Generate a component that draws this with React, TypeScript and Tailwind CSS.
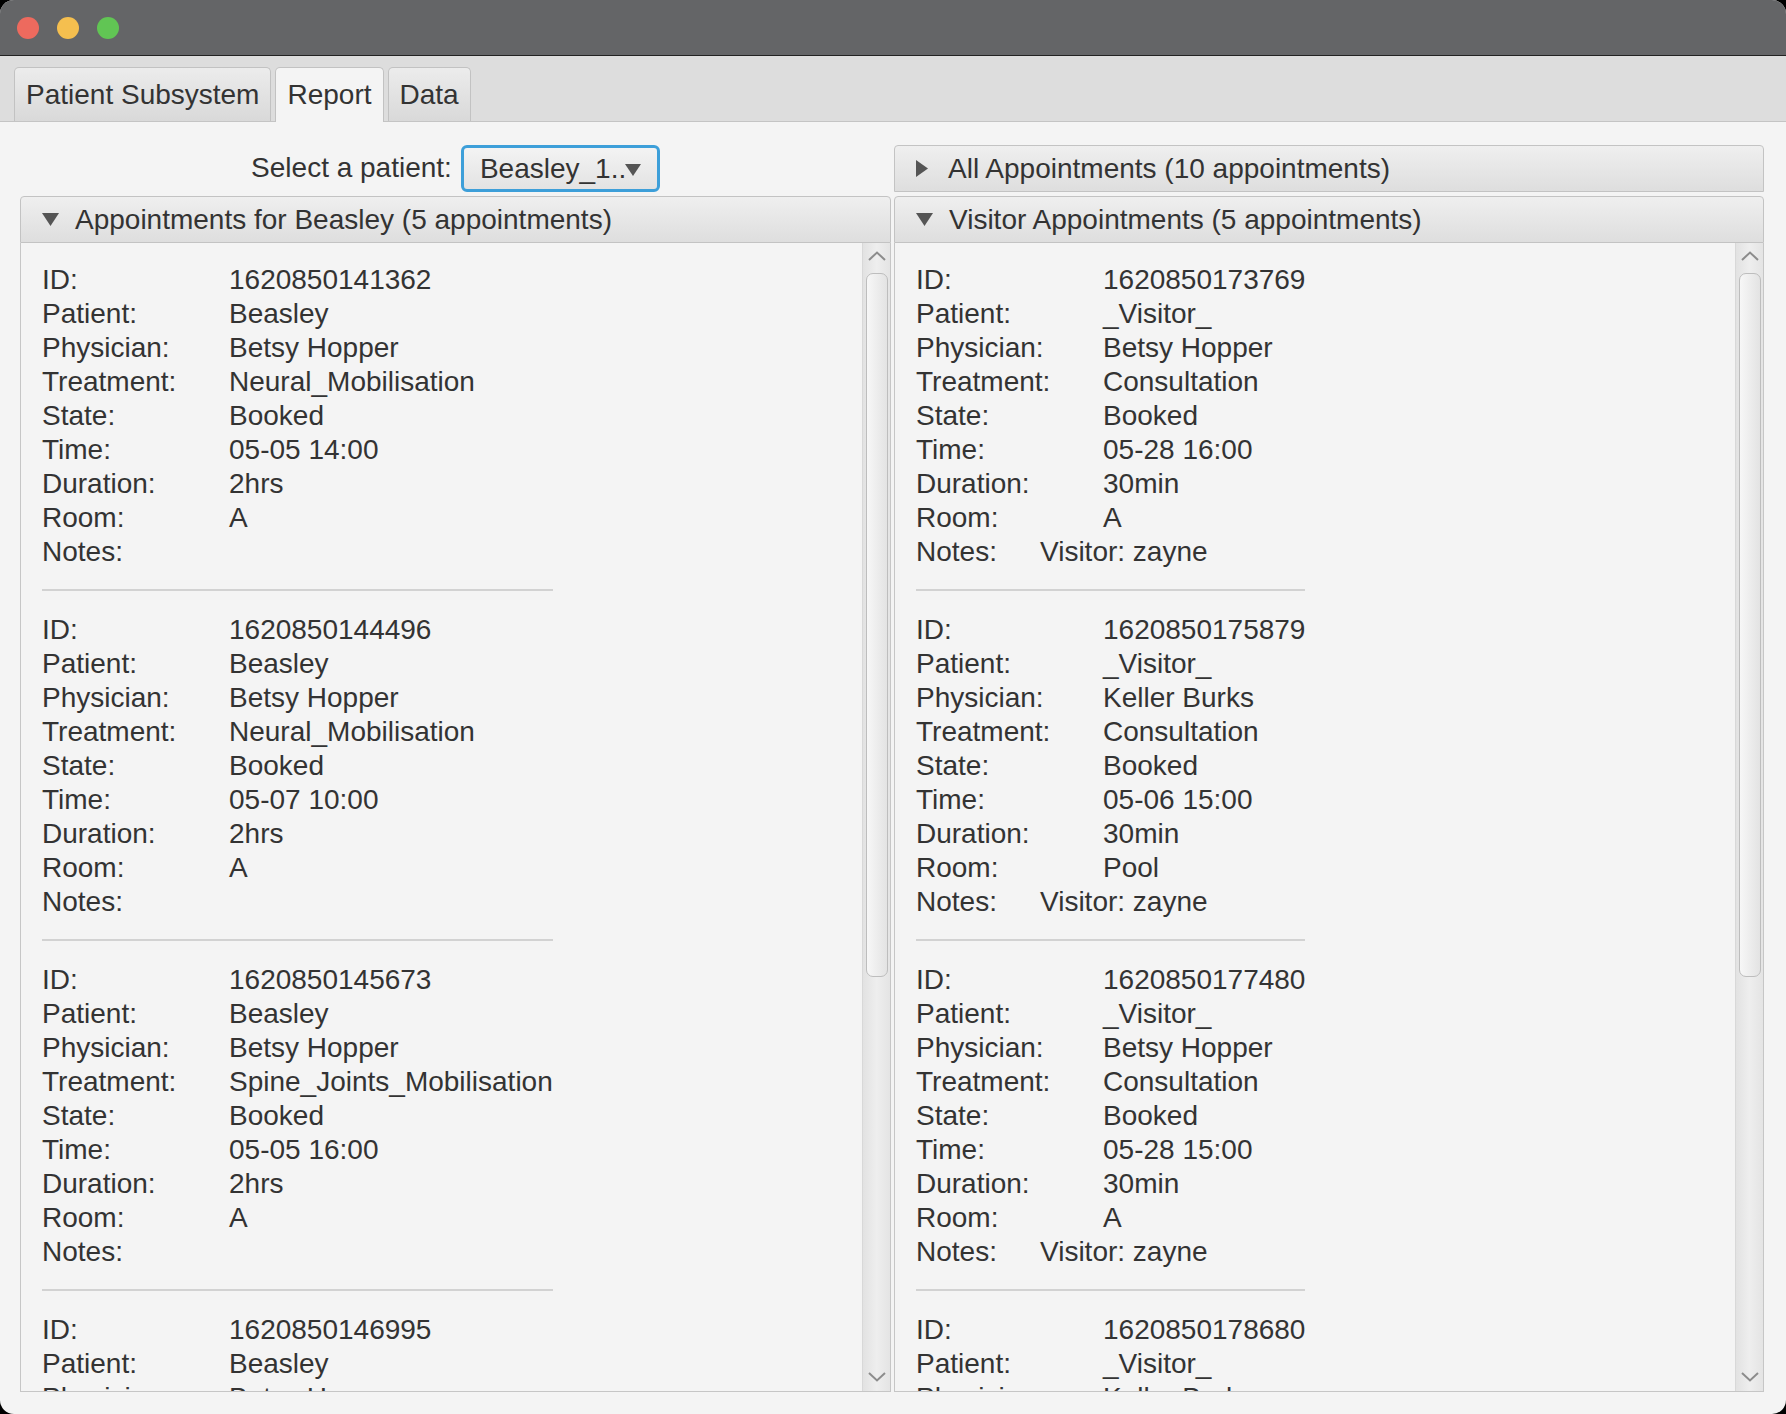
import React from "react";

type Appointment = {
  id: string;
  patient: string;
  physician: string;
  treatment: string;
  state: string;
  time: string;
  duration: string;
  room: string;
  notes: string;
};

const patientAppointments: Appointment[] = [
  { id: "1620850141362", patient: "Beasley", physician: "Betsy Hopper", treatment: "Neural_Mobilisation", state: "Booked", time: "05-05 14:00", duration: "2hrs", room: "A", notes: "" },
  { id: "1620850144496", patient: "Beasley", physician: "Betsy Hopper", treatment: "Neural_Mobilisation", state: "Booked", time: "05-07 10:00", duration: "2hrs", room: "A", notes: "" },
  { id: "1620850145673", patient: "Beasley", physician: "Betsy Hopper", treatment: "Spine_Joints_Mobilisation", state: "Booked", time: "05-05 16:00", duration: "2hrs", room: "A", notes: "" },
  { id: "1620850146995", patient: "Beasley", physician: "Betsy Hopper", treatment: "Neural_Mobilisation", state: "Booked", time: "05-08 11:00", duration: "2hrs", room: "A", notes: "" },
  { id: "1620850148210", patient: "Beasley", physician: "Betsy Hopper", treatment: "Neural_Mobilisation", state: "Booked", time: "05-10 09:00", duration: "2hrs", room: "A", notes: "" },
];

const visitorAppointments: Appointment[] = [
  { id: "1620850173769", patient: "_Visitor_", physician: "Betsy Hopper", treatment: "Consultation", state: "Booked", time: "05-28 16:00", duration: "30min", room: "A", notes: "Visitor: zayne" },
  { id: "1620850175879", patient: "_Visitor_", physician: "Keller Burks", treatment: "Consultation", state: "Booked", time: "05-06 15:00", duration: "30min", room: "Pool", notes: "Visitor: zayne" },
  { id: "1620850177480", patient: "_Visitor_", physician: "Betsy Hopper", treatment: "Consultation", state: "Booked", time: "05-28 15:00", duration: "30min", room: "A", notes: "Visitor: zayne" },
  { id: "1620850178680", patient: "_Visitor_", physician: "Keller Burks", treatment: "Consultation", state: "Booked", time: "05-30 10:00", duration: "30min", room: "A", notes: "Visitor: zayne" },
  { id: "1620850179901", patient: "_Visitor_", physician: "Betsy Hopper", treatment: "Consultation", state: "Booked", time: "06-01 14:00", duration: "30min", room: "A", notes: "Visitor: zayne" },
];

function TitleBar() {
  return (
    <div className="flex h-[56px] shrink-0 items-center gap-[18px] border-b border-[#222222] bg-[#646567] pl-[17px]">
      <span className="h-[22px] w-[22px] rounded-full bg-[#ed6a5e]" />
      <span className="h-[22px] w-[22px] rounded-full bg-[#f5bf4f]" />
      <span className="h-[22px] w-[22px] rounded-full bg-[#61c554]" />
    </div>
  );
}

const tabs = ["Patient Subsystem", "Report", "Data"];

function TabBar() {
  return (
    <div className="flex h-[66px] shrink-0 items-end gap-[4px] border-b border-[#c4c4c4] bg-[#dddddd] pl-[14px]">
      {tabs.map((tab) =>
        tab === "Report" ? (
          <div
            key={tab}
            className="relative -mb-px flex h-[55px] items-center rounded-t-[5px] border border-b-0 border-[#c2c2c2] bg-[#f4f4f4] px-[11px]"
          >
            {tab}
          </div>
        ) : (
          <div
            key={tab}
            className="flex h-[54px] items-center rounded-t-[5px] border border-b-0 border-[#c2c2c2] bg-gradient-to-b from-[#ececec] to-[#d9d9d9] px-[11px]"
          >
            {tab}
          </div>
        )
      )}
    </div>
  );
}

function Triangle({ open }: { open: boolean }) {
  return open ? (
    <svg width="17" height="13" viewBox="0 0 17 13" className="shrink-0">
      <path d="M0 0 H17 L8.5 13 Z" fill="#555555" />
    </svg>
  ) : (
    <svg width="12" height="17" viewBox="0 0 12 17" className="shrink-0">
      <path d="M0 0 L12 8.5 L0 17 Z" fill="#555555" />
    </svg>
  );
}

function PaneHeader({ title, open }: { title: string; open: boolean }) {
  return (
    <div
      className={
        "flex h-[47px] shrink-0 items-center rounded-t-[4px] border border-[#c3c3c3] bg-gradient-to-b from-[#efefef] to-[#dedede] pl-[21px] " +
        (open ? "gap-[16px]" : "gap-[20px]")
      }
    >
      <Triangle open={open} />
      <span>{title}</span>
    </div>
  );
}

function Chevron({ up }: { up: boolean }) {
  return (
    <svg width="18" height="10" viewBox="0 0 18 10" className="shrink-0">
      <path
        d={up ? "M1 9 L9 1.5 L17 9" : "M1 1 L9 8.5 L17 1"}
        fill="none"
        stroke="#8c8c8c"
        strokeWidth="2"
      />
    </svg>
  );
}

function ScrollBar() {
  return (
    <div className="flex w-[28px] shrink-0 flex-col items-center border-l border-[#d8d8d8] bg-gradient-to-r from-[#e2e2e2] via-[#eeeeee] to-[#e4e4e4]">
      <div className="mt-[8px]">
        <Chevron up />
      </div>
      <div className="mt-[12px] h-[704px] w-[22px] rounded-[7px] border border-[#bdbdbd] bg-gradient-to-r from-[#f7f7f7] to-[#e3e3e3]" />
      <div className="flex-1" />
      <div className="mb-[9px]">
        <Chevron up={false} />
      </div>
    </div>
  );
}

function Row({ label, value, wide = true }: { label: string; value: string; wide?: boolean }) {
  return (
    <div className="flex h-[34px] items-center whitespace-pre">
      <span className={wide ? "w-[187px] shrink-0" : "w-[124px] shrink-0"}>{label}</span>
      <span>{value}</span>
    </div>
  );
}

function AppointmentBlock({ a }: { a: Appointment }) {
  return (
    <div className="flex flex-col">
      <Row label="ID:" value={a.id} />
      <Row label="Patient:" value={a.patient} />
      <Row label="Physician:" value={a.physician} />
      <Row label="Treatment:" value={a.treatment} />
      <Row label="State:" value={a.state} />
      <Row label="Time:" value={a.time} />
      <Row label="Duration:" value={a.duration} />
      <Row label="Room:" value={a.room} />
      <Row label="Notes:" value={a.notes} wide={false} />
      <div className="mb-[22px] mt-[20px] h-[2px] bg-[#d2d2d2]" />
    </div>
  );
}

function ScrollPane({ items }: { items: Appointment[] }) {
  return (
    <div className="flex min-h-0 flex-1 border border-t-0 border-[#c6c6c6]">
      <div className="min-w-0 flex-1 overflow-hidden pl-[21px] pt-[20px]">
        {/* one vbox: separators take the widest row */}
        <div className="flex w-fit flex-col">
          {items.map((a) => (
            <AppointmentBlock key={a.id} a={a} />
          ))}
        </div>
      </div>
      <ScrollBar />
    </div>
  );
}

function PatientSelect() {
  return (
    <div className="flex h-[51px] shrink-0 items-start justify-center gap-[9px]">
      <span className="mt-[9px]">Select a patient:</span>
      <div className="flex h-[47px] w-[199px] items-center justify-between rounded-[6px] border-[3px] border-[#3d9fd9] bg-gradient-to-b from-[#f3f3f3] to-[#e3e3e3] pl-[16px] pr-[16px]">
        <span>Beasley_1..</span>
        <svg width="16" height="12" viewBox="0 0 16 12" className="-ml-[6px] mt-[2px]">
          <path d="M0 0 H16 L8 12 Z" fill="#555555" />
        </svg>
      </div>
    </div>
  );
}

export default function App() {
  return (
    <div className="h-[1414px] w-[1786px] bg-black font-['Liberation_Sans',Arial,sans-serif] text-[28px] leading-none text-[#333333]">
      <div className="flex h-full flex-col overflow-hidden rounded-[14px] bg-[#f4f4f4]">
        <TitleBar />
        <TabBar />
        <div className="flex min-h-0 flex-1 gap-[3px] pb-[22px] pl-[20px] pr-[22px] pt-[23px]">
          <div className="flex w-[871px] flex-col">
            <PatientSelect />
            <PaneHeader title="Appointments for Beasley (5 appointments)" open />
            <ScrollPane items={patientAppointments} />
          </div>
          <div className="flex min-w-0 flex-1 flex-col">
            <div className="mb-[4px]">
              <PaneHeader title="All Appointments (10 appointments)" open={false} />
            </div>
            <PaneHeader title="Visitor Appointments (5 appointments)" open />
            <ScrollPane items={visitorAppointments} />
          </div>
        </div>
      </div>
    </div>
  );
}
